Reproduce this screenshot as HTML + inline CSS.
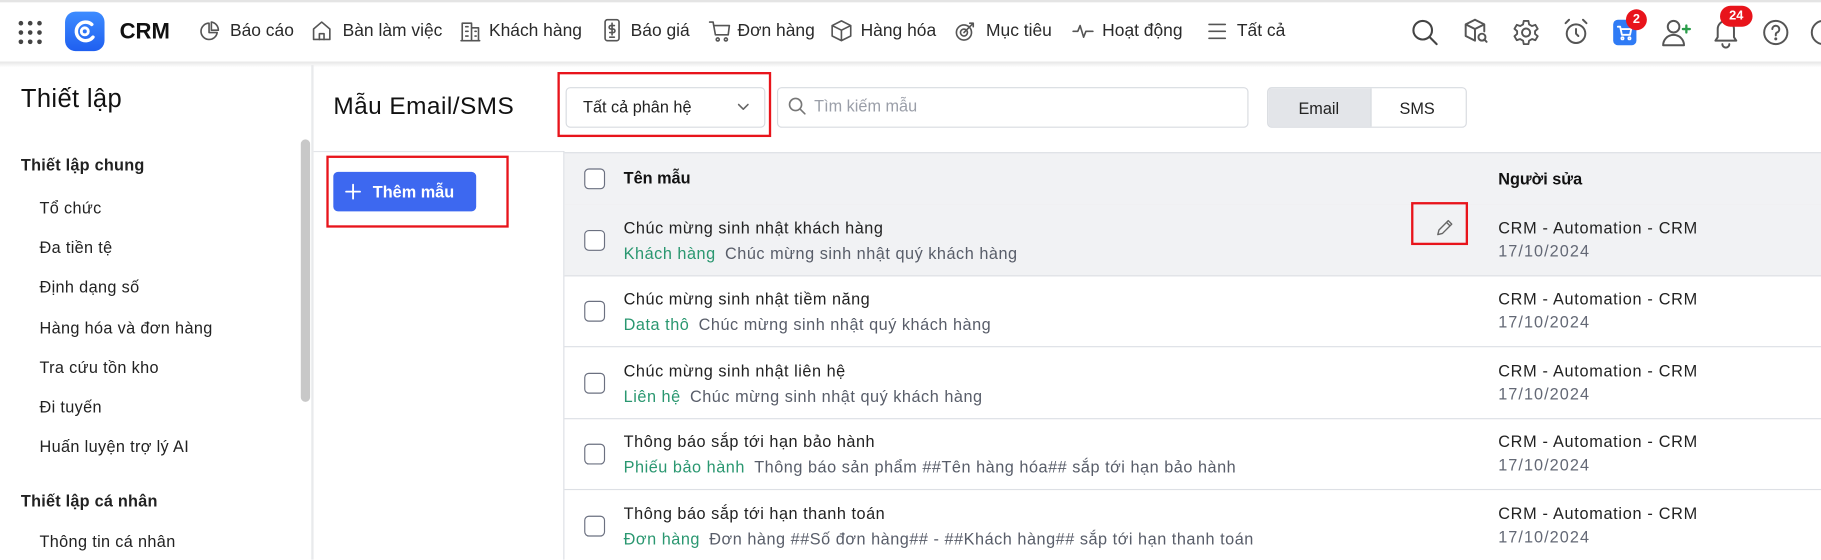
<!DOCTYPE html>
<html><head><meta charset="utf-8">
<style>
html,body{margin:0;padding:0;width:1821px;height:559px;overflow:hidden;background:#fff}
#w{position:absolute;left:0;top:0;width:1568px;height:482px;transform:scale(1.1614);transform-origin:0 0;font-family:"Liberation Sans","DejaVu Sans",sans-serif;color:#222;overflow:hidden}
.a{position:absolute;white-space:nowrap}
.nav{font-size:15px;color:#2a2a2a;top:18px}
svg{position:absolute;fill:none;stroke:#555;stroke-width:1.4;stroke-linecap:round;stroke-linejoin:round}
.side{font-size:14px;color:#222;left:34px;letter-spacing:.3px}
.sh{font-size:14px;font-weight:bold;left:18px;letter-spacing:.2px}
.row{position:absolute;left:486px;width:1090px;height:61px;border-bottom:1px solid #dde0e5}
.cb{position:absolute;left:17px;width:16px;height:16px;border:1.3px solid #6b7080;border-radius:4px;background:#fff}
.t1{position:absolute;left:51px;top:12px;font-size:14px;color:#222;white-space:nowrap;letter-spacing:.45px}
.t2{position:absolute;left:51px;top:34px;font-size:14px;color:#585d69;white-space:nowrap;letter-spacing:.45px}
.g{color:#2a9770;margin-right:8px}
.r1{position:absolute;left:804px;top:12px;font-size:14px;color:#222;white-space:nowrap;letter-spacing:.6px}
.r2{position:absolute;left:804px;top:32px;font-size:14px;color:#636875;white-space:nowrap;letter-spacing:.9px}
.red{position:absolute;border:2px solid #e8141b}
</style></head><body><div id="w">
<!-- header -->
<div class="a" style="left:0;top:0;width:1568px;height:2px;background:#e4e4e4"></div>
<div class="a" style="left:0;top:53px;width:1568px;height:5px;background:linear-gradient(#e6e6e6,#fff)"></div>
<svg style="left:15px;top:17px" width="22" height="22" viewBox="0 0 22 22"><g fill="#444" stroke="none"><circle cx="3" cy="3" r="2"/><circle cx="11" cy="3" r="2"/><circle cx="19" cy="3" r="2"/><circle cx="3" cy="11" r="2"/><circle cx="11" cy="11" r="2"/><circle cx="19" cy="11" r="2"/><circle cx="3" cy="19" r="2"/><circle cx="11" cy="19" r="2"/><circle cx="19" cy="19" r="2"/></g></svg>
<div class="a" style="left:56px;top:10px;width:34px;height:34px;border-radius:9px;background:linear-gradient(#3d8cff,#1f5ff0)"></div>
<svg style="left:62px;top:16px" width="22" height="22" viewBox="0 0 22 22"><path d="M17 5A8 8 0 1 0 18 16" stroke="#fff" stroke-width="3"/><circle cx="11" cy="11" r="3" stroke="#fff" stroke-width="2.5"/></svg>
<div class="a" style="left:103px;top:17px;font-size:19px;font-weight:bold;color:#111">CRM</div>
<svg style="left:172px;top:18px" width="18" height="18" viewBox="0 0 18 18"><path d="M8 2a7 7 0 1 0 7 8H8z"/><path d="M10 1v7h6a7 7 0 0 0-6-7z"/></svg>
<div class="a nav" style="left:198px">Báo cáo</div>
<svg style="left:268px;top:17px" width="18" height="19" viewBox="0 0 18 19"><path d="M2 17V8l7-6 7 6v9z"/><path d="M7 17v-5h4v5"/></svg>
<div class="a nav" style="left:295px">Bàn làm việc</div>
<svg style="left:396px;top:17px" width="18" height="19" viewBox="0 0 18 19"><path d="M2 18V3h8v15M10 7h6v11M1 18h16M5 6h2M5 10h2M5 14h2M13 10h1M13 14h1"/></svg>
<div class="a nav" style="left:421px">Khách hàng</div>
<svg style="left:519px;top:16px" width="16" height="20" viewBox="0 0 16 20"><rect x="2" y="1" width="12" height="18" rx="2"/><path d="M10 6H7a1.5 1.5 0 0 0 0 3h2a1.5 1.5 0 0 1 0 3H6M8 4v10M6 16h4"/></svg>
<div class="a nav" style="left:543px">Báo giá</div>
<svg style="left:610px;top:17px" width="20" height="20" viewBox="0 0 20 20"><path d="M1 2h3l2 11h11l1-8H5"/><circle cx="8" cy="17" r="1.3"/><circle cx="15" cy="17" r="1.3"/></svg>
<div class="a nav" style="left:635px">Đơn hàng</div>
<svg style="left:715px;top:17px" width="19" height="19" viewBox="0 0 19 19"><path d="M9.5 1l8 4v9l-8 4-8-4V5z M1.5 5l8 4 8-4M9.5 9v9"/></svg>
<div class="a nav" style="left:741px">Hàng hóa</div>
<svg style="left:822px;top:17px" width="19" height="19" viewBox="0 0 19 19"><circle cx="8" cy="11" r="6.5"/><circle cx="8" cy="11" r="3"/><path d="M8 11l8-8M13 3h3v3"/></svg>
<div class="a nav" style="left:849px">Mục tiêu</div>
<svg style="left:923px;top:18px" width="20" height="18" viewBox="0 0 20 18"><path d="M1 9h4l2-5 3 10 2-5h6"/></svg>
<div class="a nav" style="left:949px">Hoạt động</div>
<svg style="left:1040px;top:19px" width="16" height="16" viewBox="0 0 16 16"><path d="M1 2h14M1 8h14M1 14h14"/></svg>
<div class="a nav" style="left:1065px">Tất cả</div>
<!-- right icons -->
<svg style="left:1214px;top:15px" width="26" height="26" viewBox="0 0 26 26"><circle cx="11" cy="11" r="8" stroke="#444" stroke-width="1.8"/><path d="M17 17l6 6" stroke="#444" stroke-width="1.8"/></svg>
<svg style="left:1260px;top:15px" width="22" height="24" viewBox="0 0 22 24"><path d="M10 2l8 4v6M10 2L2 6v10l8 4M2 6l8 4 8-4M10 10v10" stroke-width="1.7"/><circle cx="16" cy="17" r="3" stroke-width="1.7"/><path d="M18 19l2 2" stroke-width="1.7"/></svg>
<svg style="left:1302px;top:16px" width="24" height="24" viewBox="0 0 24 24"><circle cx="12" cy="12" r="3.5" stroke-width="1.7"/><path d="M10 2h4l.6 3 2.5 1.4 2.9-1 2 3.4-2.3 2v2.4l2.3 2-2 3.4-2.9-1-2.5 1.4-.6 3h-4l-.6-3-2.5-1.4-2.9 1-2-3.4 2.3-2v-2.4l-2.3-2 2-3.4 2.9 1L9.4 5z" stroke-width="1.6"/></svg>
<svg style="left:1345px;top:15px" width="24" height="25" viewBox="0 0 24 25"><circle cx="12" cy="14" r="8" stroke-width="1.7"/><path d="M12 10v4l2 2M3 5l3-3M21 5l-3-3" stroke-width="1.7"/></svg>
<div class="a" style="left:1389px;top:17px;width:20px;height:22px;border-radius:4px;background:#2f7bf5"></div>
<svg style="left:1391px;top:20px" width="16" height="16" viewBox="0 0 16 16"><path d="M2 3h2l1.5 7h7l1-5H5" stroke="#fff" stroke-width="1.6"/><circle cx="6" cy="13" r="1" stroke="#fff"/><circle cx="12" cy="13" r="1" stroke="#fff"/></svg>
<div class="a" style="left:1400px;top:8px;width:18px;height:18px;border-radius:9px;background:#e8141b;color:#fff;font-size:11px;font-weight:bold;text-align:center;line-height:18px">2</div>
<svg style="left:1430px;top:14px" width="28" height="28" viewBox="0 0 28 28"><circle cx="11" cy="9" r="5" stroke-width="1.7"/><path d="M2 25a9 9 0 0 1 18 0z" stroke-width="1.7"/><path d="M22 8v6M19 11h6" stroke="#2a9d4a" stroke-width="2"/></svg>
<svg style="left:1474px;top:16px" width="24" height="26" viewBox="0 0 24 26"><path d="M12 2a7 7 0 0 0-7 7v7l-2 3h18l-2-3V9a7 7 0 0 0-7-7zM9 22a3 3 0 0 0 6 0" stroke-width="1.7"/></svg>
<div class="a" style="left:1481px;top:5px;width:28px;height:18px;border-radius:9px;background:#e8141b;color:#fff;font-size:11px;font-weight:bold;text-align:center;line-height:18px">24</div>
<svg style="left:1517px;top:16px" width="24" height="24" viewBox="0 0 24 24"><circle cx="12" cy="12" r="10" stroke-width="1.7"/><path d="M9 9a3 3 0 1 1 4 3c-1 .5-1 1-1 2.5" stroke-width="1.7"/><circle cx="12" cy="17.5" r=".6" fill="#555"/></svg>
<svg style="left:1558px;top:16px" width="24" height="24" viewBox="0 0 24 24"><circle cx="12" cy="12" r="10" stroke-width="1.7"/></svg>
<!-- sidebar -->
<div class="a" style="left:268px;top:56px;width:2px;height:426px;background:#e9eaec"></div>
<div class="a" style="left:259px;top:120px;width:8px;height:226px;border-radius:4px;background:#c8c8c8"></div>
<div class="a" style="left:18px;top:72px;font-size:22px;color:#111;letter-spacing:.3px">Thiết lập</div>
<div class="a sh" style="top:134px">Thiết lập chung</div>
<div class="a side" style="top:171px">Tổ chức</div>
<div class="a side" style="top:205px">Đa tiền tệ</div>
<div class="a side" style="top:239px">Định dạng số</div>
<div class="a side" style="top:274px">Hàng hóa và đơn hàng</div>
<div class="a side" style="top:308px">Tra cứu tồn kho</div>
<div class="a side" style="top:342px">Đi tuyến</div>
<div class="a side" style="top:376px">Huấn luyện trợ lý AI</div>
<div class="a sh" style="top:423px">Thiết lập cá nhân</div>
<div class="a side" style="top:458px">Thông tin cá nhân</div>
<!-- toolbar -->
<div class="a" style="left:287px;top:80px;font-size:21px;color:#111;letter-spacing:.4px">Mẫu Email/SMS</div>
<div class="red" style="left:480px;top:62px;width:180px;height:52px"></div>
<div class="a" style="left:487px;top:75px;width:170px;height:33px;border:1px solid #d8dbe0;border-radius:4px;background:#fff"></div>
<div class="a" style="left:502px;top:84px;font-size:14px;color:#222">Tất cả phân hệ</div>
<svg style="left:634px;top:88px" width="12" height="8" viewBox="0 0 12 8"><path d="M2 2l4 4 4-4" stroke="#666"/></svg>
<div class="a" style="left:669px;top:75px;width:404px;height:33px;border:1px solid #d8dbe0;border-radius:4px"></div>
<svg style="left:678px;top:83px" width="16" height="16" viewBox="0 0 16 16"><circle cx="7" cy="7" r="5.2" stroke="#777"/><path d="M11 11l4 4" stroke="#777"/></svg>
<div class="a" style="left:701px;top:83px;font-size:14px;color:#9a9ea8">Tìm kiếm mẫu</div>
<div class="a" style="left:1091px;top:75px;width:170px;height:33px;border:1px solid #d8dbe0;border-radius:4px;overflow:hidden">
 <div class="a" style="left:0;top:0;width:88px;height:33px;background:#e3e5e9;border-right:1px solid #d8dbe0"></div>
 <div class="a" style="left:26px;top:9px;font-size:14px;color:#222">Email</div>
 <div class="a" style="left:113px;top:9px;font-size:14px;color:#222">SMS</div>
</div>
<!-- left panel -->
<div class="a" style="left:270px;top:130px;width:216px;height:1px;background:#e3e5e9"></div>
<div class="a" style="left:485px;top:130px;width:1px;height:352px;background:#dde0e5"></div>
<div class="red" style="left:281px;top:134px;width:153px;height:58px"></div>
<div class="a" style="left:287px;top:148px;width:123px;height:34px;border-radius:4px;background:#3d68f0"></div>
<svg style="left:297px;top:158px" width="14" height="14" viewBox="0 0 14 14"><path d="M7 1v12M1 7h12" stroke="#fff" stroke-width="1.6"/></svg>
<div class="a" style="left:321px;top:157px;font-size:14px;font-weight:bold;color:#fff">Thêm mẫu</div>
<!-- table -->
<div class="row" style="top:131px;height:44px;background:#f1f2f4;border-top:1px solid #dde0e5">
 <div class="cb" style="top:13px"></div>
 <div class="a" style="left:51px;top:13px;font-size:14px;font-weight:bold;color:#111">Tên mẫu</div>
 <div class="a" style="left:804px;top:14px;font-size:14px;font-weight:bold;color:#111">Người sửa</div>
</div>
<div class="row" style="top:176px;background:#f1f2f4">
 <div class="cb" style="top:22px"></div>
 <div class="t1">Chúc mừng sinh nhật khách hàng</div>
 <div class="t2"><span class="g">Khách hàng</span>Chúc mừng sinh nhật quý khách hàng</div>
 <svg style="left:750px;top:12px" width="16" height="16" viewBox="0 0 16 16"><path d="M2 14l1-4 8-8 3 3-8 8z M9.5 3.5l3 3" stroke="#666" stroke-width="1.2"/></svg>
 <div class="r1">CRM - Automation - CRM</div>
 <div class="r2">17/10/2024</div>
</div>
<div class="red" style="left:1215px;top:174px;width:45px;height:33px"></div>
<div class="row" style="top:237px">
 <div class="cb" style="top:22px"></div>
 <div class="t1">Chúc mừng sinh nhật tiềm năng</div>
 <div class="t2"><span class="g">Data thô</span>Chúc mừng sinh nhật quý khách hàng</div>
 <div class="r1">CRM - Automation - CRM</div>
 <div class="r2">17/10/2024</div>
</div>
<div class="row" style="top:299px">
 <div class="cb" style="top:22px"></div>
 <div class="t1">Chúc mừng sinh nhật liên hệ</div>
 <div class="t2"><span class="g">Liên hệ</span>Chúc mừng sinh nhật quý khách hàng</div>
 <div class="r1">CRM - Automation - CRM</div>
 <div class="r2">17/10/2024</div>
</div>
<div class="row" style="top:360px">
 <div class="cb" style="top:22px"></div>
 <div class="t1">Thông báo sắp tới hạn bảo hành</div>
 <div class="t2"><span class="g">Phiếu bảo hành</span>Thông báo sản phẩm ##Tên hàng hóa## sắp tới hạn bảo hành</div>
 <div class="r1">CRM - Automation - CRM</div>
 <div class="r2">17/10/2024</div>
</div>
<div class="row" style="top:422px">
 <div class="cb" style="top:22px"></div>
 <div class="t1">Thông báo sắp tới hạn thanh toán</div>
 <div class="t2"><span class="g">Đơn hàng</span>Đơn hàng ##Số đơn hàng## - ##Khách hàng## sắp tới hạn thanh toán</div>
 <div class="r1">CRM - Automation - CRM</div>
 <div class="r2">17/10/2024</div>
</div>
</div></body></html>
